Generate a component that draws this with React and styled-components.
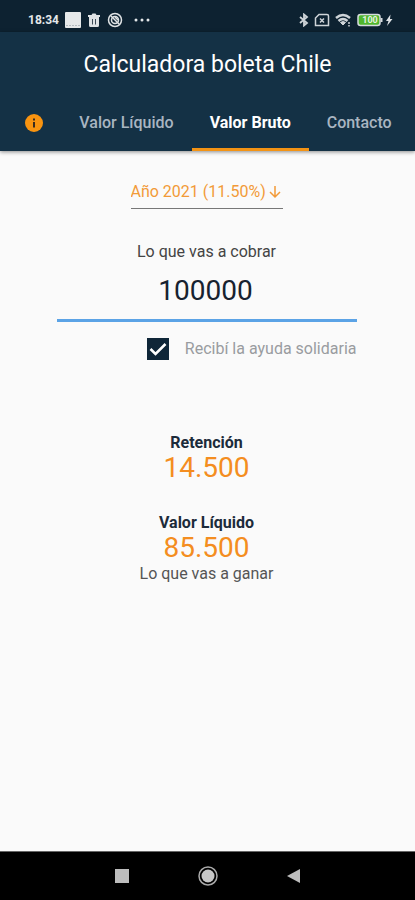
import React, { useState } from 'react';
import styled, { createGlobalStyle } from 'styled-components';

const GlobalStyle = createGlobalStyle`
  * {
    box-sizing: border-box;
  }

  body {
    margin: 0;
    background: #fafafa;
    font-family: Roboto, 'Liberation Sans', sans-serif;
  }

  button, input, select {
    font-family: inherit;
    border: 0;
    border-radius: 0;
    background: none;
    padding: 0;
    margin: 0;
  }
`;

const Screen = styled.div`
  min-height: 100vh;
  display: flex;
  flex-direction: column;
`;

const StatusBar = styled.div`
  height: 32px;
  padding: 8px 20px 0 28px;
  display: flex;
  justify-content: space-between;
  background: #0d2231;
  color: #e4e8ea;
`;

const StatusGroup = styled.div`
  height: 24px;
  display: flex;
  align-items: center;
  gap: ${props => props.$gap}px;

  svg {
    display: block;
  }
`;

const Clock = styled.span`
  font-size: 12px;
  font-weight: 700;
  line-height: 24px;
`;

const Header = styled.header`
  background: #143145;
  box-shadow: 0 1px 4px rgba(0, 0, 0, 0.45);
`;

const Title = styled.h1`
  margin: 0;
  padding: 18px 0 14px;
  color: #fff;
  font-size: 23px;
  font-weight: 400;
  line-height: 30px;
  text-align: center;
`;

const Tabs = styled.nav`
  padding-left: 2px;
  display: flex;
  justify-content: center;
`;

const Tab = styled.button`
  height: 57px;
  padding: 0 18px;
  display: flex;
  align-items: center;
  color: ${props => props.$active ? '#fff' : '#a9b5c1'};
  font-size: 16px;
  font-weight: ${props => props.$active ? 700 : 500};
  white-space: nowrap;
  box-shadow: ${props => props.$active ? 'inset 0 -3px 0 #f39314' : 'none'};
`;

const Content = styled.main`
  flex: 1;
  width: 100%;
  max-width: 302px;
  margin: 0 auto;
  padding: 24px 2px 0 0;
  display: flex;
  flex-direction: column;
  align-items: center;
`;

const YearField = styled.label`
  height: 34px;
  display: flex;
  align-items: center;
  border-bottom: 1px solid #777;
  color: #f29a38;
`;

const YearSelect = styled.select`
  height: 32px;
  appearance: none;
  color: inherit;
  font-size: 16px;
  outline: none;
`;

const AmountLabel = styled.label`
  margin-top: 33px;
  color: #444;
  font-size: 16px;
  line-height: 20px;
`;

const AmountInput = styled.input`
  width: 100%;
  height: 60px;
  padding: 0 2px 1px 0;
  border-bottom: 3px solid #5ba3e6;
  color: #17222f;
  font-size: 28px;
  text-align: center;
  outline: none;
`;

const CheckRow = styled.label`
  align-self: flex-end;
  margin-top: 16px;
  display: flex;
  align-items: center;
  gap: 16px;
  color: #999ca0;
  font-size: 16px;
  line-height: 22px;
  white-space: nowrap;
`;

const CheckBox = styled.span`
  width: 22px;
  height: 22px;
  display: grid;

  > * {
    grid-area: 1 / 1;
  }

  input {
    width: 22px;
    height: 22px;
    appearance: none;
    border: 2px solid #0f2638;
  }

  input:checked {
    background: #0f2638;
  }

  svg {
    pointer-events: none;
  }
`;

const Result = styled.section`
  margin-top: ${props => props.$first ? 74 : 30}px;
  text-align: center;
`;

const ResultTitle = styled.h2`
  margin: 0;
  color: #1c2b3a;
  font-size: 16px;
  font-weight: 700;
  line-height: 18px;
`;

const ResultValue = styled.div`
  color: #f48d20;
  font-size: 28px;
  line-height: 32px;
`;

const ResultNote = styled.div`
  color: #555;
  font-size: 16px;
  line-height: 20px;
`;

const NavBar = styled.footer`
  height: 49px;
  border-top: 1px solid #666;
  background: #000;
  display: flex;
  align-items: center;
  justify-content: center;
  gap: 62px;
`;

const NavButton = styled.button`
  width: 24px;
  height: 24px;

  svg {
    display: block;
  }
`;

const InfoIcon = () => (
  <svg width="18" height="18" viewBox="0 0 18 18" aria-label="Información">
    <circle cx="9" cy="9" r="9" fill="#f99410" />
    <path d="M8 4.500h2v2H8zM8 8h2v5.500H8z" fill="#3a2c20" />
  </svg>
);

const LeftStatus = () => (
  <StatusGroup $gap={6}>
    <Clock>18:34</Clock>
    <svg width="16" height="16" viewBox="0 0 16 16">
      <rect width="16" height="16" rx="1" fill="#e6e9ea" />
      <path d="M1 13.500h14" stroke="#b4bbc0" strokeDasharray="2 1" />
    </svg>
    <svg width="14" height="14" viewBox="0 0 14 14">
      <path d="M1 2h3.500l1-1.500h3l1 1.500H13v2H1zM2 4h10v8.500q0 1.500-1.500 1.500h-7Q2 14 2 12.500z" fill="#dfe3e5" />
      <path d="M5.500 6v5.500M8.500 6v5.500" stroke="#3c4b57" strokeWidth="1" />
    </svg>
    <svg width="16" height="16" viewBox="0 0 16 16" fill="none" stroke="#dfe3e5">
      <circle cx="8" cy="8" r="6.500" strokeWidth="1.500" />
      <circle cx="8" cy="8" r="3.500" strokeWidth="1.500" />
      <path d="M4 4l8 8M8 5l3 3" strokeWidth="1.500" />
    </svg>
    <svg width="24" height="16" viewBox="0 0 24 16" fill="#e4e8ea">
      <circle cx="7" cy="8" r="1.500" />
      <circle cx="13" cy="8" r="1.500" />
      <circle cx="19" cy="8" r="1.500" />
    </svg>
  </StatusGroup>
);

const RightStatus = () => (
  <StatusGroup $gap={5}>
    <svg width="10" height="14" viewBox="0 0 10 14" fill="none" stroke="#ced4d8" strokeWidth="1.800">
      <path d="M1 4l7 6L5 12.500v-11L8 4l-7 6" />
    </svg>
    <svg width="16" height="14" viewBox="0 0 16 14" fill="none" stroke="#ced4d8" strokeWidth="1.500">
      <path d="M5 1.500h8q1.500 0 1.500 1.500v9.500h-13V5z" />
      <path d="M6 5.500l4 4M10 5.500l-4 4" />
    </svg>
    <svg width="17" height="14" viewBox="0 0 17 14" fill="none" stroke="#ced4d8" strokeWidth="2.400">
      <path d="M1 5Q8 -1 15 5M3.500 8Q8 4 12.500 8" />
      <path d="M5.500 9.500Q8 7.500 10.500 9.500L8 12z" fill="#ced4d8" strokeWidth="1" />
      <path d="M14 9v2M14 12v1.500" strokeWidth="1.500" />
    </svg>
    <svg width="38" height="14" viewBox="0 0 38 14">
      <rect x="1" y="1.500" width="22" height="11" rx="2.500" fill="#4fb62d" stroke="#d5dbde" strokeWidth="1.500" />
      <path d="M24.500 5v4" stroke="#d5dbde" strokeWidth="2" />
      <text x="13" y="10" fontSize="9" fontWeight="700" textAnchor="middle" fill="#e6f2e0">100</text>
      <path d="M33.500 1.500L29 8h2.500l-1.500 5L35.500 6H33z" fill="#dde2e5" />
    </svg>
  </StatusGroup>
);

const tabs = ['Valor Líquido', 'Valor Bruto', 'Contacto'];

const format = value => String(value).replace(/\B(?=(\d{3})+$)/g, '.');

const App = () => {
  const [active, setActive] = useState('Valor Bruto');
  const [amount, setAmount] = useState('100000');
  const [solidaria, setSolidaria] = useState(true);

  // 11.5% de retención, más 3% si se recibió la ayuda
  const gross = Number(amount) || 0;
  const retention = Math.round(gross * (solidaria ? 145 : 115) / 1000);

  return (
    <Screen>
      <GlobalStyle />
      <StatusBar>
        <LeftStatus />
        <RightStatus />
      </StatusBar>
      <Header>
        <Title>Calculadora boleta Chile</Title>
        <Tabs>
          <Tab type="button" $active={active === 'info'} onClick={() => setActive('info')}>
            <InfoIcon />
          </Tab>
          {tabs.map(name => (
            <Tab key={name} type="button" $active={active === name} onClick={() => setActive(name)}>
              {name}
            </Tab>
          ))}
        </Tabs>
      </Header>

      <Content>
        <YearField>
          <YearSelect aria-label="Año">
            <option>Año 2021 (11.50%)</option>
          </YearSelect>
          <svg width="16" height="16" viewBox="0 0 16 16" fill="none" stroke="currentColor" strokeWidth="1.500">
            <path d="M8 2v11M3 8l5 5 5-5" />
          </svg>
        </YearField>

        <AmountLabel htmlFor="amount">Lo que vas a cobrar</AmountLabel>
        <AmountInput
          id="amount"
          inputMode="numeric"
          value={amount}
          onChange={e => setAmount(e.target.value)}
        />

        <CheckRow>
          <CheckBox>
            <input
              type="checkbox"
              checked={solidaria}
              onChange={e => setSolidaria(e.target.checked)}
            />
            {solidaria && (
              <svg width="22" height="22" viewBox="0 0 22 22" fill="none" stroke="#fff" strokeWidth="2.500">
                <path d="M3.500 11l5 5L18.500 6" />
              </svg>
            )}
          </CheckBox>
          Recibí la ayuda solidaria
        </CheckRow>

        <Result $first>
          <ResultTitle>Retención</ResultTitle>
          <ResultValue>{format(retention)}</ResultValue>
        </Result>
        <Result>
          <ResultTitle>Valor Líquido</ResultTitle>
          <ResultValue>{format(gross - retention)}</ResultValue>
          <ResultNote>Lo que vas a ganar</ResultNote>
        </Result>
      </Content>

      <NavBar>
        <NavButton type="button" aria-label="Recientes">
          <svg width="24" height="24" viewBox="0 0 24 24">
            <rect x="5" y="5" width="14" height="14" fill="#bdbdbd" />
          </svg>
        </NavButton>
        <NavButton type="button" aria-label="Inicio">
          <svg width="24" height="24" viewBox="0 0 24 24">
            <circle cx="12" cy="12" r="9" fill="none" stroke="#aaa" strokeWidth="1.500" />
            <circle cx="12" cy="12" r="6.500" fill="#c6c6c6" />
          </svg>
        </NavButton>
        <NavButton type="button" aria-label="Atrás">
          <svg width="24" height="24" viewBox="0 0 24 24">
            <path d="M5 12l13-7v14z" fill="#bdbdbd" />
          </svg>
        </NavButton>
      </NavBar>
    </Screen>
  );
};

export default App;
